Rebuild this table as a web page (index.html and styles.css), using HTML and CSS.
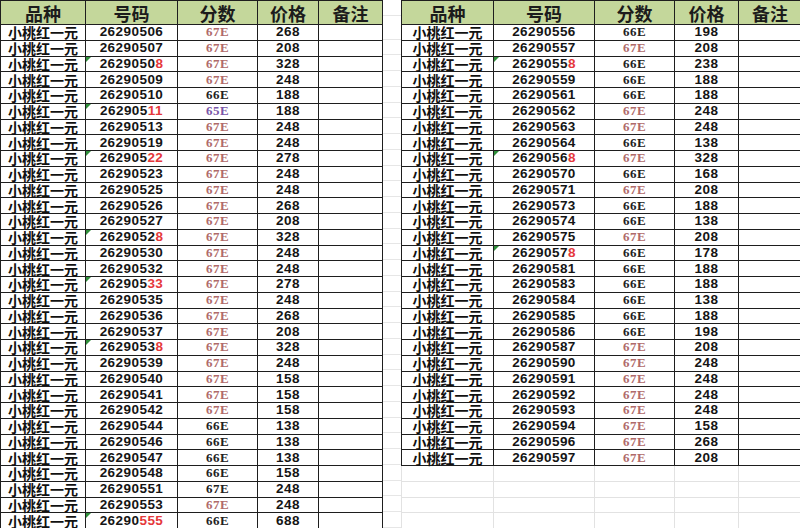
FILE: index.html
```html
<!DOCTYPE html>
<html lang="zh">
<head>
<meta charset="utf-8">
<title>小桃红一元</title>
<link rel="stylesheet" href="styles.css">
</head>
<body>
<div class="sheet">
  <table class="tbl tbl-left">
    <colgroup><col class="w1"><col class="w2"><col class="w3"><col class="w4"><col class="w5"></colgroup>
    <thead><tr><th>品种</th><th>号码</th><th>分数</th><th>价格</th><th>备注</th></tr></thead>
    <tbody>
      <tr><td class="name">小桃红一元</td><td class="num">26290506</td><td class="sc r">67E</td><td class="pr">268</td><td></td></tr>
      <tr><td class="name">小桃红一元</td><td class="num">26290507</td><td class="sc r">67E</td><td class="pr">208</td><td></td></tr>
      <tr><td class="name">小桃红一元</td><td class="num tri">2629050<span class="hl">8</span></td><td class="sc r">67E</td><td class="pr">328</td><td></td></tr>
      <tr><td class="name">小桃红一元</td><td class="num">26290509</td><td class="sc r">67E</td><td class="pr">248</td><td></td></tr>
      <tr><td class="name">小桃红一元</td><td class="num">26290510</td><td class="sc">66E</td><td class="pr">188</td><td></td></tr>
      <tr><td class="name">小桃红一元</td><td class="num tri">262905<span class="hl">11</span></td><td class="sc p">65E</td><td class="pr">188</td><td></td></tr>
      <tr><td class="name">小桃红一元</td><td class="num">26290513</td><td class="sc r">67E</td><td class="pr">248</td><td></td></tr>
      <tr><td class="name">小桃红一元</td><td class="num">26290519</td><td class="sc r">67E</td><td class="pr">248</td><td></td></tr>
      <tr><td class="name">小桃红一元</td><td class="num tri">262905<span class="hl">22</span></td><td class="sc r">67E</td><td class="pr">278</td><td></td></tr>
      <tr><td class="name">小桃红一元</td><td class="num">26290523</td><td class="sc r">67E</td><td class="pr">248</td><td></td></tr>
      <tr><td class="name">小桃红一元</td><td class="num">26290525</td><td class="sc r">67E</td><td class="pr">248</td><td></td></tr>
      <tr><td class="name">小桃红一元</td><td class="num">26290526</td><td class="sc r">67E</td><td class="pr">268</td><td></td></tr>
      <tr><td class="name">小桃红一元</td><td class="num">26290527</td><td class="sc r">67E</td><td class="pr">208</td><td></td></tr>
      <tr><td class="name">小桃红一元</td><td class="num tri">2629052<span class="hl">8</span></td><td class="sc r">67E</td><td class="pr">328</td><td></td></tr>
      <tr><td class="name">小桃红一元</td><td class="num">26290530</td><td class="sc r">67E</td><td class="pr">248</td><td></td></tr>
      <tr><td class="name">小桃红一元</td><td class="num">26290532</td><td class="sc r">67E</td><td class="pr">248</td><td></td></tr>
      <tr><td class="name">小桃红一元</td><td class="num tri">262905<span class="hl">33</span></td><td class="sc r">67E</td><td class="pr">278</td><td></td></tr>
      <tr><td class="name">小桃红一元</td><td class="num">26290535</td><td class="sc r">67E</td><td class="pr">248</td><td></td></tr>
      <tr><td class="name">小桃红一元</td><td class="num">26290536</td><td class="sc r">67E</td><td class="pr">268</td><td></td></tr>
      <tr><td class="name">小桃红一元</td><td class="num">26290537</td><td class="sc r">67E</td><td class="pr">208</td><td></td></tr>
      <tr><td class="name">小桃红一元</td><td class="num tri">2629053<span class="hl">8</span></td><td class="sc r">67E</td><td class="pr">328</td><td></td></tr>
      <tr><td class="name">小桃红一元</td><td class="num">26290539</td><td class="sc r">67E</td><td class="pr">248</td><td></td></tr>
      <tr><td class="name">小桃红一元</td><td class="num">26290540</td><td class="sc r">67E</td><td class="pr">158</td><td></td></tr>
      <tr><td class="name">小桃红一元</td><td class="num">26290541</td><td class="sc r">67E</td><td class="pr">158</td><td></td></tr>
      <tr><td class="name">小桃红一元</td><td class="num">26290542</td><td class="sc r">67E</td><td class="pr">158</td><td></td></tr>
      <tr><td class="name">小桃红一元</td><td class="num">26290544</td><td class="sc">66E</td><td class="pr">138</td><td></td></tr>
      <tr><td class="name">小桃红一元</td><td class="num">26290546</td><td class="sc">66E</td><td class="pr">138</td><td></td></tr>
      <tr><td class="name">小桃红一元</td><td class="num">26290547</td><td class="sc">66E</td><td class="pr">138</td><td></td></tr>
      <tr><td class="name">小桃红一元</td><td class="num">26290548</td><td class="sc">66E</td><td class="pr">158</td><td></td></tr>
      <tr><td class="name">小桃红一元</td><td class="num">26290551</td><td class="sc">67E</td><td class="pr">248</td><td></td></tr>
      <tr><td class="name">小桃红一元</td><td class="num">26290553</td><td class="sc r">67E</td><td class="pr">248</td><td></td></tr>
      <tr><td class="name">小桃红一元</td><td class="num tri">26290<span class="hl">555</span></td><td class="sc">66E</td><td class="pr">688</td><td></td></tr>
    </tbody>
  </table>
  <div class="gap"></div>
  <table class="tbl tbl-right">
    <colgroup><col class="v1"><col class="v2"><col class="v3"><col class="v4"><col class="v5"></colgroup>
    <thead><tr><th>品种</th><th>号码</th><th>分数</th><th>价格</th><th>备注</th></tr></thead>
    <tbody>
      <tr><td class="name">小桃红一元</td><td class="num">26290556</td><td class="sc">66E</td><td class="pr">198</td><td></td></tr>
      <tr><td class="name">小桃红一元</td><td class="num">26290557</td><td class="sc r">67E</td><td class="pr">208</td><td></td></tr>
      <tr><td class="name">小桃红一元</td><td class="num tri">2629055<span class="hl">8</span></td><td class="sc">66E</td><td class="pr">238</td><td></td></tr>
      <tr><td class="name">小桃红一元</td><td class="num">26290559</td><td class="sc">66E</td><td class="pr">188</td><td></td></tr>
      <tr><td class="name">小桃红一元</td><td class="num">26290561</td><td class="sc">66E</td><td class="pr">188</td><td></td></tr>
      <tr><td class="name">小桃红一元</td><td class="num">26290562</td><td class="sc r">67E</td><td class="pr">248</td><td></td></tr>
      <tr><td class="name">小桃红一元</td><td class="num">26290563</td><td class="sc r">67E</td><td class="pr">248</td><td></td></tr>
      <tr><td class="name">小桃红一元</td><td class="num">26290564</td><td class="sc">66E</td><td class="pr">138</td><td></td></tr>
      <tr><td class="name">小桃红一元</td><td class="num tri">2629056<span class="hl">8</span></td><td class="sc r">67E</td><td class="pr">328</td><td></td></tr>
      <tr><td class="name">小桃红一元</td><td class="num">26290570</td><td class="sc">66E</td><td class="pr">168</td><td></td></tr>
      <tr><td class="name">小桃红一元</td><td class="num">26290571</td><td class="sc r">67E</td><td class="pr">208</td><td></td></tr>
      <tr><td class="name">小桃红一元</td><td class="num">26290573</td><td class="sc">66E</td><td class="pr">188</td><td></td></tr>
      <tr><td class="name">小桃红一元</td><td class="num">26290574</td><td class="sc">66E</td><td class="pr">138</td><td></td></tr>
      <tr><td class="name">小桃红一元</td><td class="num">26290575</td><td class="sc r">67E</td><td class="pr">208</td><td></td></tr>
      <tr><td class="name">小桃红一元</td><td class="num tri">2629057<span class="hl">8</span></td><td class="sc">66E</td><td class="pr">178</td><td></td></tr>
      <tr><td class="name">小桃红一元</td><td class="num">26290581</td><td class="sc">66E</td><td class="pr">188</td><td></td></tr>
      <tr><td class="name">小桃红一元</td><td class="num">26290583</td><td class="sc">66E</td><td class="pr">188</td><td></td></tr>
      <tr><td class="name">小桃红一元</td><td class="num">26290584</td><td class="sc">66E</td><td class="pr">138</td><td></td></tr>
      <tr><td class="name">小桃红一元</td><td class="num">26290585</td><td class="sc">66E</td><td class="pr">188</td><td></td></tr>
      <tr><td class="name">小桃红一元</td><td class="num">26290586</td><td class="sc">66E</td><td class="pr">198</td><td></td></tr>
      <tr><td class="name">小桃红一元</td><td class="num">26290587</td><td class="sc r">67E</td><td class="pr">208</td><td></td></tr>
      <tr><td class="name">小桃红一元</td><td class="num">26290590</td><td class="sc r">67E</td><td class="pr">248</td><td></td></tr>
      <tr><td class="name">小桃红一元</td><td class="num">26290591</td><td class="sc r">67E</td><td class="pr">248</td><td></td></tr>
      <tr><td class="name">小桃红一元</td><td class="num">26290592</td><td class="sc r">67E</td><td class="pr">248</td><td></td></tr>
      <tr><td class="name">小桃红一元</td><td class="num">26290593</td><td class="sc r">67E</td><td class="pr">248</td><td></td></tr>
      <tr><td class="name">小桃红一元</td><td class="num">26290594</td><td class="sc r">67E</td><td class="pr">158</td><td></td></tr>
      <tr><td class="name">小桃红一元</td><td class="num">26290596</td><td class="sc r">67E</td><td class="pr">268</td><td></td></tr>
      <tr><td class="name">小桃红一元</td><td class="num">26290597</td><td class="sc r">67E</td><td class="pr">208</td><td></td></tr>
      <tr class="blank"><td></td><td></td><td></td><td></td><td></td></tr>
      <tr class="blank"><td></td><td></td><td></td><td></td><td></td></tr>
      <tr class="blank"><td></td><td></td><td></td><td></td><td></td></tr>
      <tr class="blank"><td></td><td></td><td></td><td></td><td></td></tr>
    </tbody>
  </table>
</div>
</body>
</html>
```
FILE: styles.css
```css
html, body {
  margin: 0;
  padding: 0;
  background: #ffffff;
}
body {
  width: 800px;
  height: 528px;
  overflow: hidden;
  font-family: "Noto Sans CJK SC", "DejaVu Sans", sans-serif;
  color: #141414;
}
.sheet {
  display: flex;
  align-items: flex-start;
}
.gap {
  width: 18px;
  flex: none;
  height: 528px;
  background-image: repeating-linear-gradient(to bottom, transparent 0, transparent 14.75px, #e6e6e6 14.75px, #e6e6e6 15.75px);
  background-position: 0 24px;
}
.tbl {
  border-collapse: collapse;
  table-layout: fixed;
  flex: none;
}
.tbl-left { width: 382px; }
.tbl-right { width: 400px; }
.w1 { width: 85px; }
.w2 { width: 92px; }
.w3 { width: 80px; }
.w4 { width: 61px; }
.w5 { width: 64px; }
.v1 { width: 92px; }
.v2 { width: 101px; }
.v3 { width: 80px; }
.v4 { width: 64px; }
.v5 { width: 63px; }
.tbl th, .tbl td {
  border: 1px solid #1e1e1e;
  padding: 0;
  text-align: center;
  vertical-align: middle;
  white-space: nowrap;
}
.tbl th {
  height: 23px;
  background: #c4d79b;
  font-size: 18px;
  font-weight: bold;
  line-height: 22px;
  color: #1c1c1c;
}
.tbl tbody tr {
  height: 15.75px;
}
.tbl td {
  line-height: 14px;
  height: 14.75px;
}
.name {
  font-size: 14px;
  line-height: 14px;
  font-weight: bold;
  color: #111;
}
.num, .pr {
  font-family: "Liberation Sans", "DejaVu Sans", sans-serif;
  font-size: 13.5px;
  letter-spacing: 0.45px;
  font-weight: bold;
  color: #151515;
}
.sc {
  font-family: "Liberation Serif", serif;
  font-size: 13px;
  letter-spacing: 0.5px;
  font-weight: bold;
  color: #222;
}
.sc.r { color: #b06a6a; }
.sc.p { color: #7a56a8; }
.hl { color: #e5383b; }
.tri { position: relative; }
.tri::before {
  content: "";
  position: absolute;
  left: 0;
  top: 0;
  border-top: 5px solid #2f8f3a;
  border-right: 5px solid transparent;
}
.tbl .blank td {
  border-color: #e2e2e2;
}
```
